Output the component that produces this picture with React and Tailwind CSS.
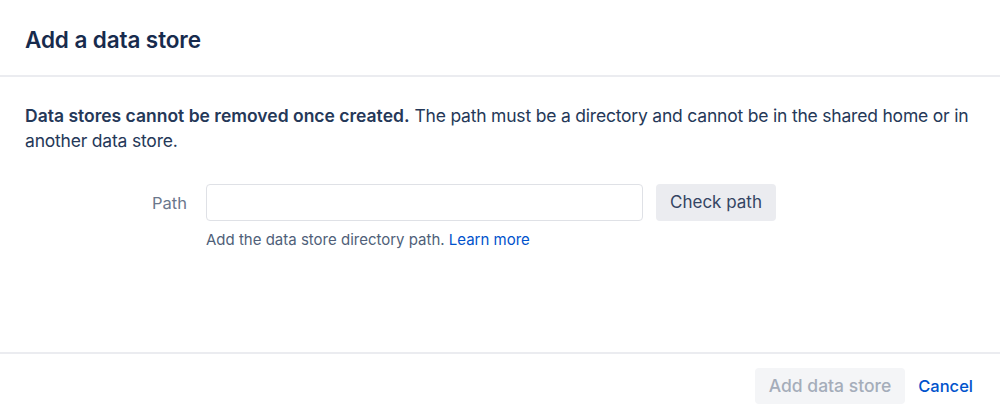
import React from "react";

export default function App() {
  return (
    <div className="flex h-[418px] w-[1000px] flex-col bg-white font-['Inter',sans-serif] text-[#172b4d]">
      {/* Header */}
      <div className="h-[77px] border-b-2 border-[#ebecf0] px-[25px] pt-[24px]">
        <h1 className="text-[22.5px] font-semibold leading-[32px] tracking-[-0.1px]">Add a data store</h1>
      </div>

      {/* Body */}
      <div className="flex-1 px-[25px] pt-[26px]">
        <p className="text-[17.5px] leading-[25px] text-[#253858]">
          <strong className="font-semibold">Data stores cannot be removed once created.</strong>{" "}
          <span className="tracking-[-0.2px]">
            The path must be a directory and cannot be in the shared home or in another data store.
          </span>
        </p>

        <div className="mt-[31px] flex items-start">
          <label className="w-[162px] pt-[9px] text-right text-[16.5px] leading-[21px] text-[#6b778c]">Path</label>
          <div className="ml-[19px]">
            <div className="flex items-center">
              <input
                type="text"
                className="h-[37px] w-[437px] rounded-[4px] border border-[#dfe1e6] bg-white px-2 text-[16px] outline-none"
              />
              <button className="ml-[13px] h-[37px] w-[120px] rounded-[4px] bg-[#ebecf0] pt-[1px] text-[17px] text-[#344563]">
                Check path
              </button>
            </div>
            <p className="mt-[9px] text-[15px] leading-[20px] text-[#505f79]">
              Add the data store directory path. <a className="text-[#0052cc]" href="#">Learn more</a>
            </p>
          </div>
        </div>
      </div>

      {/* Footer */}
      <div className="flex h-[66px] items-center justify-end border-t-2 border-[#ebecf0] pr-[14px]">
        <button className="h-[36px] rounded-[4px] bg-[#f4f5f7] px-[14px] text-[17.5px] font-medium text-[#a5adba]">
          Add data store
        </button>
        <button className="h-[36px] px-[13px] text-[16.5px] font-medium text-[#0052cc]">Cancel</button>
      </div>
    </div>
  );
}
